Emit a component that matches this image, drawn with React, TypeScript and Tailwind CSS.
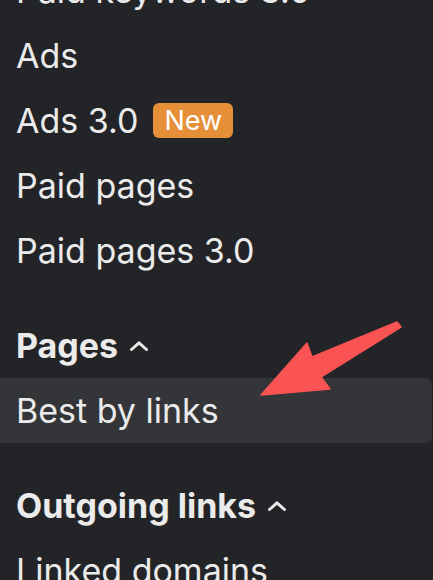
import React from 'react';

const items1 = ['Paid keywords 3.0', 'Ads', 'Ads 3.0', 'Paid pages', 'Paid pages 3.0'];

function Chevron() {
  return (
    <svg width="18" height="10" viewBox="0 0 18 10" className="shrink-0">
      <polyline points="1.5,8.5 9,1.8 16.5,8.5" fill="none" stroke="#e8e8e8" strokeWidth="3" strokeLinecap="round" strokeLinejoin="round" />
    </svg>
  );
}

function Row({ label, badge, active }: { label: string; badge?: string; active?: boolean }) {
  return (
    <div
      className={
        'flex h-[65px] items-center gap-[15px] pl-4 mr-px rounded-r-[7px] ' +
        (active ? 'bg-[#343538]' : '')
      }
    >
      <span className="whitespace-nowrap">{label}</span>
      {badge && (
        <span className="flex h-[35px] items-center rounded-[6px] bg-[#e58f39] px-[11px] text-[27px] font-normal text-white">
          {badge}
        </span>
      )}
    </div>
  );
}

function Heading({ label }: { label: string }) {
  return (
    <div className="mt-[30px] flex h-[65px] items-center gap-3 pl-4 font-bold">
      <span className="whitespace-nowrap">{label}</span>
      <Chevron />
    </div>
  );
}

export default function App() {
  return (
    <div
      className="relative h-[580px] w-[433px] overflow-hidden bg-[#232427] text-[34px] leading-[65px] text-[#ebebeb]"
      style={{ fontFamily: 'Inter, "Noto Sans", sans-serif' }}
    >
      <div className="-mt-[42px] flex flex-col">
        {items1.map((label) => (
          <Row key={label} label={label} badge={label === 'Ads 3.0' ? 'New' : undefined} />
        ))}
        <Heading label="Pages" />
        <Row label="Best by links" active />
        <Heading label="Outgoing links" />
        <Row label="Linked domains" />
      </div>

      {/* annotation arrow */}
      <svg className="pointer-events-none absolute left-0 top-0" width="433" height="580">
        <polygon
          points="261,395 307,343 312,357 397,322 401,327 321,377 330,389"
          fill="#f95353"
          stroke="#f95353"
          strokeWidth="1.5"
          strokeLinejoin="round"
        />
      </svg>
    </div>
  );
}
